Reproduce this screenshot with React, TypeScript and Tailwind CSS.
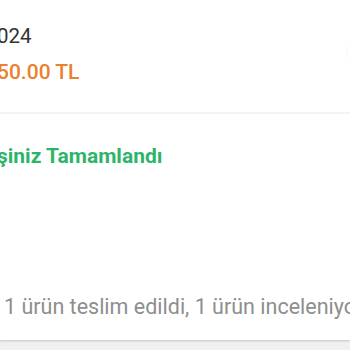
import React from "react";

export default function App() {
  return (
    <div className="w-[350px] h-[350px] overflow-hidden bg-[#f0f0f0]" style={{ fontFamily: "Roboto, 'Noto Sans', sans-serif" }}>
      <div className="relative h-[340px] bg-white shadow-[0_1px_2px_rgba(0,0,0,0.18)] flex flex-col">
        <div className="pt-[22px] pb-[26px] ml-[-3px] flex flex-col gap-[8px] border-b-2 border-[#f3f3f3]">
          <div className="text-[20.5px] leading-[28px] text-[#333333] whitespace-nowrap">024</div>
          <div className="text-[21px] leading-[28px] font-medium text-[#e8822e] whitespace-nowrap">50.00 TL</div>
        </div>
        <div className="pt-[28px] ml-[-3px] text-[21px] leading-[28px] font-bold text-[#2cb56a] whitespace-nowrap">
          şiniz Tamamlandı
        </div>
        <div className="mt-[123px] pl-[4px] text-[21.5px] leading-[28px] text-[#8e8e8e] whitespace-nowrap">
          1 ürün teslim edildi, 1 ürün inceleniyor
        </div>
        <div className="absolute right-[2px] top-[46px] w-[2px] h-[12px] bg-[#fafafa]" />
      </div>
    </div>
  );
}
